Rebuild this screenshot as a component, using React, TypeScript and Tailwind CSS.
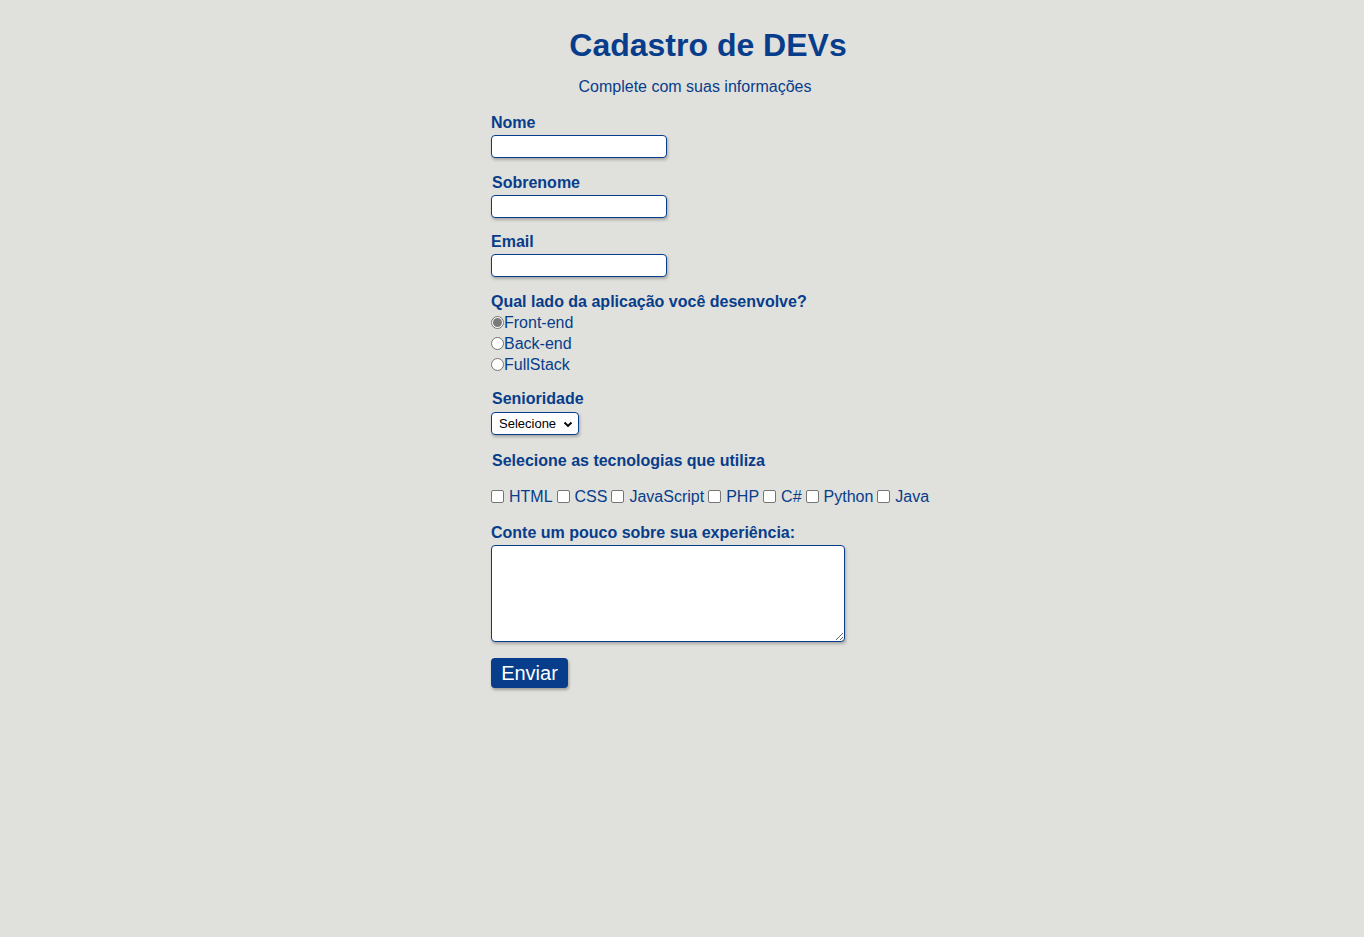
import React from "react";

const blue = "text-[#073d8a]";

function Radio({ checked, label }: { checked?: boolean; label: string }) {
  return (
    <div className="flex h-[21px] items-center">
      <span className="flex h-[13px] w-[13px] items-center justify-center rounded-full border border-[#767676] bg-white">
        {checked && <span className="h-[9px] w-[9px] rounded-full bg-[#7a7a7a]" />}
      </span>
      <span className={`text-[16px] ${blue}`}>{label}</span>
    </div>
  );
}

function Check({ label, first }: { label: string; first?: boolean }) {
  return (
    <span className="flex items-center">
      <span className={`${first ? "" : "ml-[4px]"} -mt-[2px] h-[13px] w-[13px] rounded-[2px] border border-[#767676] bg-white`} />
      <span className={`ml-[5px] text-[16px] ${blue}`}>{label}</span>
    </span>
  );
}

const inputCls =
  "block h-[23px] w-[176px] rounded-[4px] border border-[#073d8a] bg-white shadow-[1px_2px_3px_rgba(0,0,0,0.25)]";

export default function App() {
  return (
    <div
      className="min-h-[937px] w-full bg-[#e0e0dc]"
      style={{ fontFamily: '"Liberation Sans", Arial, sans-serif' }}
    >
      <div className="mx-auto w-[382px] pt-[26px]">
        <h1 className={`pl-[52px] text-center text-[32px] font-bold leading-[38px] ${blue}`}>
          Cadastro de DEVs
        </h1>
        <p className={`mt-[14px] pl-[26px] text-center text-[16px] leading-[18px] ${blue}`}>
          Complete com suas informações
        </p>

        <label className={`mt-[18px] block text-[16px] font-bold leading-[18px] ${blue}`}>Nome</label>
        <input className={`mt-[3px] ${inputCls}`} />

        <label className={`ml-px mt-[16px] block text-[16px] font-bold leading-[18px] ${blue}`}>Sobrenome</label>
        <input className={`mt-[3px] ${inputCls}`} />

        <label className={`mt-[15px] block text-[16px] font-bold leading-[18px] ${blue}`}>Email</label>
        <input className={`mt-[3px] ${inputCls}`} />

        <p className={`mt-[16px] text-[16px] font-bold leading-[18px] ${blue}`}>
          Qual lado da aplicação você desenvolve?
        </p>
        <div className="mt-[1px]">
          <Radio checked label="Front-end" />
          <Radio label="Back-end" />
          <Radio label="FullStack" />
        </div>

        <label className={`ml-px mt-[15px] block text-[16px] font-bold leading-[18px] ${blue}`}>Senioridade</label>
        <div className="mt-[4px] flex h-[23px] w-[88px] items-center justify-between rounded-[4px] border border-[#073d8a] bg-white pl-[7px] pr-[5px] shadow-[1px_2px_3px_rgba(0,0,0,0.25)]">
          <span className="text-[13px] text-black">Selecione</span>
          <svg width="10" height="10" viewBox="0 0 10 10">
            <path d="M1.5 3.5 L5 7 L8.5 3.5" fill="none" stroke="#000" strokeWidth="1.8" />
          </svg>
        </div>

        <p className={`ml-px mt-[17px] text-[16px] font-bold leading-[18px] ${blue}`}>
          Selecione as tecnologias que utiliza
        </p>
        <div className="mt-[18px] flex h-[18px] items-center whitespace-nowrap">
          <Check first label="HTML" />
          <Check label="CSS" />
          <Check label="JavaScript" />
          <Check label="PHP" />
          <Check label="C#" />
          <Check label="Python" />
          <Check label="Java" />
        </div>

        <label className={`mt-[18px] block text-[16px] font-bold leading-[18px] ${blue}`}>
          Conte um pouco sobre sua experiência:
        </label>
        <textarea className="mt-[3px] block h-[97px] w-[354px] rounded-[4px] border border-[#073d8a] bg-white shadow-[1px_2px_3px_rgba(0,0,0,0.25)]" />

        <button className="mt-[16px] flex h-[30px] w-[77px] items-center justify-center rounded-[4px] bg-[#073d8a] text-[20px] text-white shadow-[1px_2px_3px_rgba(0,0,0,0.3)]">
          Enviar
        </button>
      </div>
    </div>
  );
}
